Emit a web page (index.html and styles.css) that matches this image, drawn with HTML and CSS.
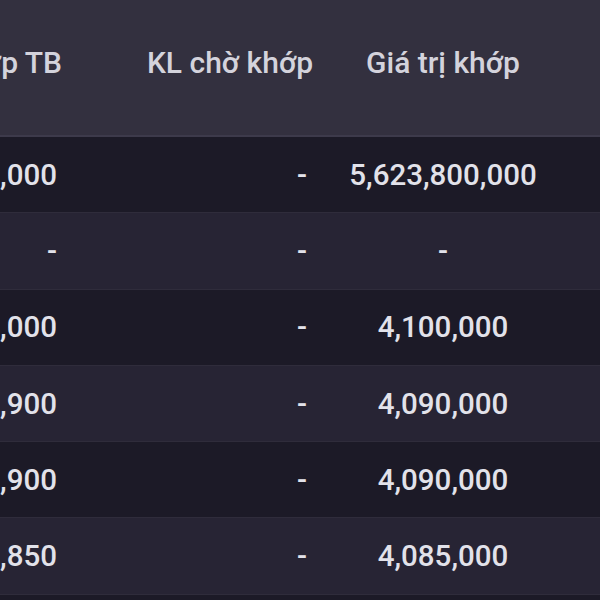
FILE: index.html
```html
<!DOCTYPE html>
<html lang="vi">
<head>
<meta charset="utf-8">
<link rel="stylesheet" href="styles.css">
</head>
<body>
<div class="table">
  <div class="row head">
    <div class="cell c1">Giá khớp TB</div>
    <div class="cell c2">KL chờ khớp</div>
    <div class="cell c3">Giá trị khớp</div>
    <div class="cell c4"></div>
  </div>
  <div class="row dark">
    <div class="cell c1">5,000</div>
    <div class="cell c2">-</div>
    <div class="cell c3">5,623,800,000</div>
    <div class="cell c4"></div>
  </div>
  <div class="row light">
    <div class="cell c1">-</div>
    <div class="cell c2">-</div>
    <div class="cell c3">-</div>
    <div class="cell c4"></div>
  </div>
  <div class="row dark">
    <div class="cell c1">4,000</div>
    <div class="cell c2">-</div>
    <div class="cell c3">4,100,000</div>
    <div class="cell c4"></div>
  </div>
  <div class="row light">
    <div class="cell c1">3,900</div>
    <div class="cell c2">-</div>
    <div class="cell c3">4,090,000</div>
    <div class="cell c4"></div>
  </div>
  <div class="row dark">
    <div class="cell c1">3,900</div>
    <div class="cell c2">-</div>
    <div class="cell c3">4,090,000</div>
    <div class="cell c4"></div>
  </div>
  <div class="row light">
    <div class="cell c1">3,850</div>
    <div class="cell c2">-</div>
    <div class="cell c3">4,085,000</div>
    <div class="cell c4"></div>
  </div>
</div>
</body>
</html>
```
FILE: styles.css
```css
html, body {
  margin: 0;
  padding: 0;
  width: 600px;
  height: 600px;
  overflow: hidden;
  background: #1c1a27;
}
.table {
  width: 600px;
  font-family: Roboto, "Noto Sans", sans-serif;
  font-weight: 500;
  font-size: 29.5px;
  color: #e2e2ea;
}
.row {
  display: grid;
  grid-template-columns: 140px 180px 246px 1fr;
  height: 76.3px;
  align-items: center;
  border-bottom: 1px solid #2f2c3b;
  box-sizing: border-box;
}
.row.head {
  height: 137px;
  padding-bottom: 10px;
  font-size: 30px;
  background: #33303f;
  color: #d4d3dc;
  border-bottom: 2px solid #3d3a4b;
}
.row.dark { background: #1c1a27; }
.row.light { background: #272434; }
.cell {
  white-space: nowrap;
  display: flex;
  align-items: center;
}
.c1 {
  justify-content: flex-end;
  padding-right: 83px;
}
.head .c1 { padding-right: 78px; }
.c2 {
  justify-content: flex-end;
  padding-right: 13px;
}
.head .c2 {
  justify-content: center;
  padding-right: 0;
}
.c3 { justify-content: center; }
.head .c4 { align-self: stretch; }
```
